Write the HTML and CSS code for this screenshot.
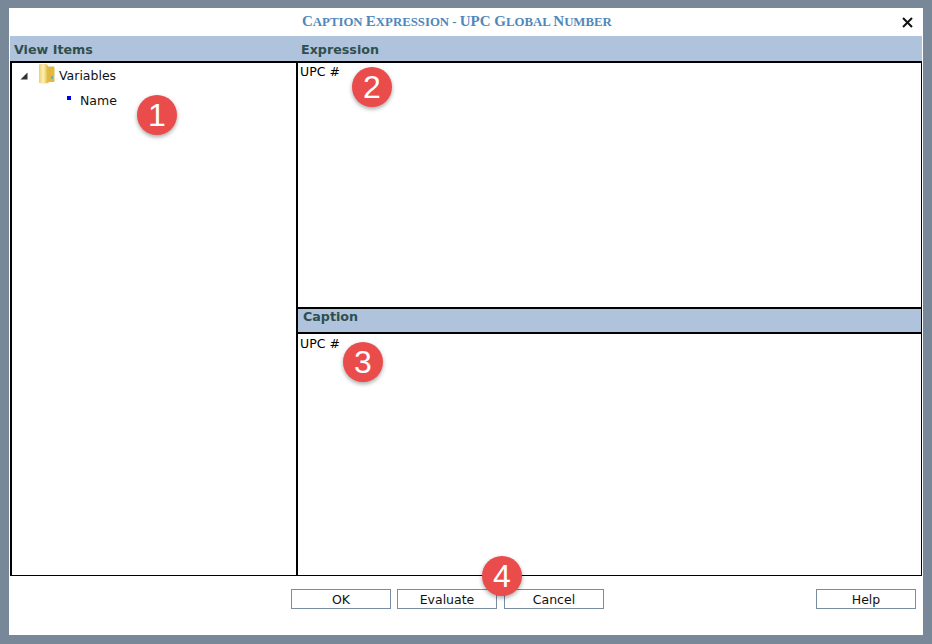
FILE: index.html
```html
<!DOCTYPE html>
<html lang="en">
<head>
<meta charset="utf-8">
<title>Caption Expression</title>
<link rel="stylesheet" href="styles.css">
</head>
<body>
<div class="dialog">
  <header class="titlebar">
    <h1 class="title"><span class="cap">C</span>aption <span class="cap">E</span>xpression - <span class="cap">UPC G</span>lobal <span class="cap">N</span>umber</h1>
    <svg class="close" viewBox="0 0 11 11" aria-label="Close"><path d="M1 1 10 10M10 1 1 10"/></svg>
  </header>
  <div class="heads">
    <div class="head head-left">View Items</div>
    <div class="head head-right">Expression</div>
  </div>
  <main class="panes">
    <section class="tree">
      <div class="tree-row">
        <svg class="twisty" viewBox="0 0 8 8"><path d="M7.500 0.500V7.500H0.500Z"/></svg>
        <svg class="folder" viewBox="0 0 17 20">
          <defs>
            <linearGradient id="fg" x1="0" y1="0" x2="1" y2="0">
              <stop offset="0" stop-color="#eccf6e"/><stop offset="0.5" stop-color="#fdf2b4"/><stop offset="1" stop-color="#e3bd4c"/>
            </linearGradient>
          </defs>
          <path d="M1 1.500Q1 .5 2 .5H9L10 2.500H15.500Q16.500 2.500 16.500 3.500V17Q16.500 18 15.500 18H11L10 19H3Q1 19 1 17.500Z" fill="#dfb944"/>
          <path d="M1 1.500Q1 .5 2 .5H8Q9.500 .5 9.500 2V17.500Q9.500 19.500 8 19.500H3Q1 19.500 1 17.500Z" fill="url(#fg)"/>
          <path d="M14 12v3" stroke="#5aa8c8" stroke-width="1.500"/>
        </svg>
        <span class="tree-label">Variables</span>
      </div>
      <div class="tree-row tree-child">
        <span class="bullet"></span>
        <span class="tree-label">Name</span>
      </div>
    </section>
    <section class="editors">
      <div class="editor editor-top">UPC #</div>
      <div class="subhead">Caption</div>
      <div class="editor editor-bottom">UPC #</div>
    </section>
  </main>
  <footer class="actions">
    <div class="actions-main">
      <button class="btn">OK</button>
      <button class="btn">Evaluate</button>
      <button class="btn btn-cancel">Cancel</button>
    </div>
    <button class="btn">Help</button>
  </footer>
  <span class="badge badge-1">1</span>
  <span class="badge badge-2">2</span>
  <span class="badge badge-3">3</span>
  <span class="badge badge-4">4</span>
</div>
</body>
</html>
```

FILE: styles.css
```css
* { box-sizing: border-box; }
html, body { margin: 0; height: 100%; }
body {
  background: #788898;
  padding: 8px 9px 9px 9px;
  font-family: "DejaVu Sans", sans-serif;
  overflow: hidden;
}
.dialog {
  position: relative;
  width: 914px;
  height: 627px;
  background: #fff;
  display: flex;
  flex-direction: column;
  padding: 0 1px;
}
.titlebar {
  height: 28px;
  display: flex;
  align-items: center;
  justify-content: space-between;
  padding: 0 9px 1px 292px;
}
.title {
  margin: 0;
  font: bold 12.8px "Liberation Serif", serif;
  text-transform: uppercase;
  color: #5087ba;
  white-space: nowrap;
}
.cap { font-size: 15px; }
.close { width: 11px; height: 11px; margin-top: 1px; }
.close path { stroke: #111; stroke-width: 2; fill: none; }
.heads {
  height: 25px;
  background: #afc3dc;
  display: flex;
  font: bold 12.7px "DejaVu Sans", sans-serif;
  color: #2f4f4f;
  align-items: center;
  padding-top: 1px;
}
.head-left { width: 287px; padding-left: 4px; }
.head-right { padding-left: 4px; }
.panes {
  height: 515px;
  display: flex;
  border: solid #000;
  border-width: 2px 1px 1px 2px;
}
.tree {
  width: 286px;
  border-right: 2px solid #000;
  padding-left: 8px;
  font-size: 12.5px;
  color: #111;
}
.tree-row { display: flex; align-items: center; height: 25px; }
.twisty { width: 8px; height: 8px; fill: #333; margin-right: 10px; }
.folder { width: 17px; height: 20px; margin: -3px 4px 0 0; }
.tree-child { padding-left: 47px; }
.bullet { width: 4px; height: 4px; background: #0000e0; margin: -6px 9px 0 0; }
.editors { flex: 1; display: flex; flex-direction: column; }
.editor {
  padding: 1px 2px;
  font-size: 12.5px;
  color: #000;
  line-height: 16px;
}
.editor-top { height: 244px; }
.editor-bottom { flex: 1; padding-top: 2px; }
.subhead {
  height: 27px;
  background: #afc3dc;
  border: solid #000;
  border-width: 2px 0;
  padding: 0 0 4px 5px;
  font: bold 12.7px/15px "DejaVu Sans", sans-serif;
  color: #2f4f4f;
}
.actions {
  flex: 1;
  display: flex;
  align-items: flex-start;
  justify-content: space-between;
  padding: 13px 6px 0 281px;
}
.actions-main { display: flex; gap: 6px; }
.btn {
  width: 100px;
  height: 20px;
  background: #fff;
  border: 1px solid #7a8ca0;
  padding: 0;
  font: 12.5px "DejaVu Sans", sans-serif;
  color: #111;
}
.btn-cancel { margin-left: 1px; }
.badge {
  position: absolute;
  width: 40px;
  height: 40px;
  border-radius: 50%;
  background: #ea4b4b;
  color: #fff;
  font: 32px/40px "Liberation Sans", sans-serif;
  text-align: center;
  box-shadow: 0 2px 4px rgba(0, 0, 0, .35);
}
.badge-1 { left: 128px; top: 87px; }
.badge-2 { left: 343px; top: 59px; }
.badge-3 { left: 334px; top: 334px; }
.badge-4 { left: 473px; top: 548px; }
```
